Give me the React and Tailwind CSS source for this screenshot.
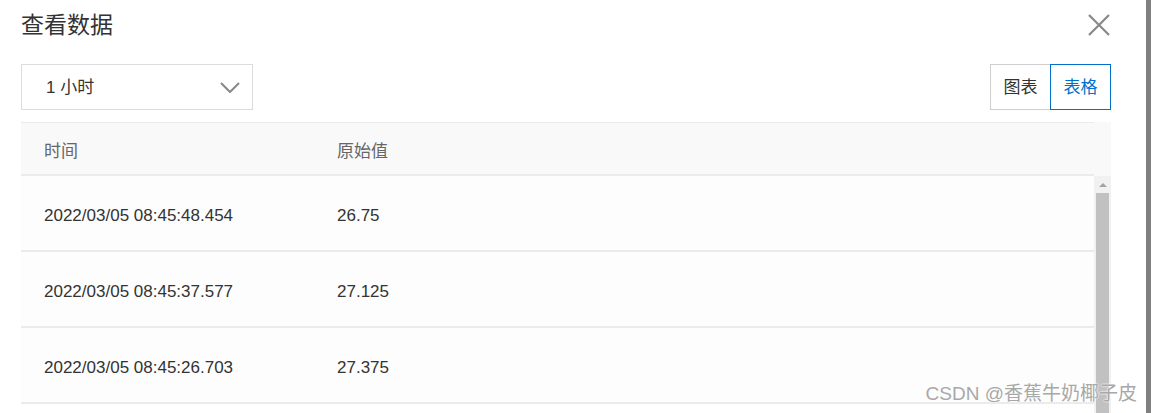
const rows = [
  { time: "2022/03/05 08:45:48.454", value: "26.75" },
  { time: "2022/03/05 08:45:37.577", value: "27.125" },
  { time: "2022/03/05 08:45:26.703", value: "27.375" },
];

const font = { fontFamily: '"Liberation Sans", "Noto Sans CJK SC", sans-serif' };

function App() {
  return (
    <div className="relative flex h-[413px] w-[1151px] overflow-hidden bg-white text-[#333]" style={font}>
      <div className="flex flex-1 flex-col pl-[21px] pr-[35px]">
        <div className="flex h-[50px] shrink-0 items-center justify-between">
          <h1 className="text-[23px] leading-none text-[#333]">查看数据</h1>
          <svg width="22" height="22" viewBox="0 0 22 22" className="mr-[1px]">
            <path d="M1 1 21 21M21 1 1 21" stroke="#888" strokeWidth="2.2" fill="none" />
          </svg>
        </div>

        <div className="mt-[14px] flex shrink-0 items-center justify-between">
          <div className="flex h-[46px] w-[232px] items-center justify-between border border-[#dcdcdc] pl-[24px] pr-[12px]">
            <span className="pt-[2px] text-[17px]">1 小时</span>
            <svg width="20" height="11" viewBox="0 0 20 11">
              <path d="M1 1 10 10 19 1" stroke="#888" strokeWidth="2" fill="none" />
            </svg>
          </div>
          <div className="flex h-[46px] text-[17px]">
            <button className="w-[60px] border border-r-0 border-[#cfcfcf] pt-[2px] text-[#333]">图表</button>
            <button className="w-[61px] border border-[#0070cc] pt-[2px] text-[#0070cc]">表格</button>
          </div>
        </div>

        <div className="mt-[12px] flex min-h-0 flex-1 flex-col">
          <div className="flex h-[54px] shrink-0 bg-[#f9f9f9] text-[17px] text-[#666]">
            <div className="flex flex-1 items-center border-t border-b-2 border-[#ececec] pt-[6px]">
              <div className="w-[316px] pl-[23px]">时间</div>
              <div>原始值</div>
            </div>
            <div className="w-[17px]" />
          </div>
          <div className="flex min-h-0 flex-1 overflow-hidden">
            <div className="flex flex-1 flex-col">
              {rows.map((r) => (
                <div
                  key={r.time}
                  className="flex h-[76px] shrink-0 items-center border-b-2 border-[#ebebeb] bg-[#fdfdfd] pt-[6px] text-[17px] text-[#333]"
                >
                  <div className="w-[316px] pl-[23px]">{r.time}</div>
                  <div>{r.value}</div>
                </div>
              ))}
            </div>
            <div className="flex w-[17px] flex-col items-center bg-[#f1f1f1]">
              <div className="flex h-[17px] shrink-0 items-center justify-center">
                <div className="h-0 w-0 border-x-[4px] border-b-[4px] border-x-transparent border-b-[#a3a3a3]" />
              </div>
              <div className="w-[13px] flex-1 bg-[#c1c1c1]" />
            </div>
          </div>
        </div>
      </div>
      <div className="w-[5px] shrink-0 bg-[#808080]" />

      <div
        className="absolute bottom-[10px] right-[14px] text-[19px] leading-none text-[#a8a8a8]"
        style={{ textShadow: "0 0 2px #fff, 0 0 2px #fff" }}
      >
        CSDN @香蕉牛奶椰子皮
      </div>
    </div>
  );
}

export default App;
